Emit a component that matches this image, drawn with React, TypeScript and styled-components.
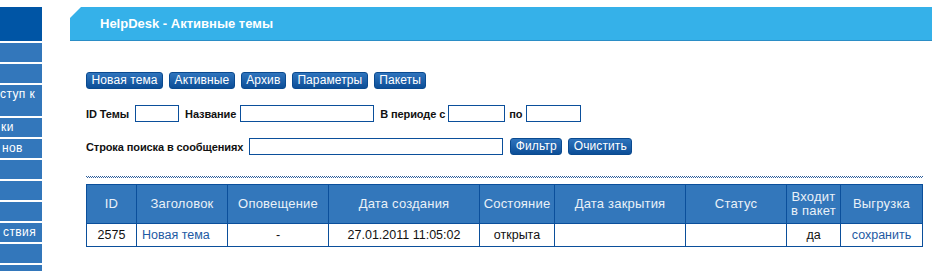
import styled, { createGlobalStyle } from 'styled-components'

const GlobalStyle = createGlobalStyle`
  html, body {
    margin: 0;
    padding: 0;
    background: #ffffff;
    font-family: "Liberation Sans", Arial, sans-serif;
  }
`

const Page = styled.div`
  display: flex;
  align-items: flex-start;
  padding-top: 7px;
  width: 932px;
  height: 271px;
  overflow: hidden;
  box-sizing: border-box;
`

const Sidebar = styled.nav`
  width: 42px;
  flex-shrink: 0;
  display: flex;
  flex-direction: column;
  gap: 2px;
`

const SideTop = styled.div`
  height: 34px;
  flex-shrink: 0;
  background: #0055a5;
`

const SideItem = styled.div<{ $tall?: boolean; $indent?: number }>`
  height: ${p => (p.$tall ? 31 : 19)}px;
  flex-shrink: 0;
  background: #3377bb;
  color: #ffffff;
  font-size: 12px;
  line-height: 18px;
  white-space: nowrap;
  overflow: hidden;
  letter-spacing: 0.4px;
  padding-left: ${p => p.$indent ?? 0}px;
`

const Main = styled.div`
  flex: 1;
  margin-left: 28px;
  display: flex;
  flex-direction: column;
`

const TitleBar = styled.div`
  height: 33px;
  background: #35b1e9;
  border-bottom: 1px solid #2b8ec6;
  clip-path: polygon(11px 0, 100% 0, 100% 100%, 0 100%, 0 11px);
  display: flex;
  align-items: center;
  padding-left: 30px;
  color: #ffffff;
  font-weight: bold;
  font-size: 13px;
`

const Content = styled.div`
  padding: 0 10px 0 16px;
  display: flex;
  flex-direction: column;
`

const ButtonRow = styled.div`
  display: flex;
  gap: 6px;
  margin-top: 31px;
`

const Button = styled.button`
  height: 17px;
  padding: 0 4.5px;
  border: 1px solid #0a4a8f;
  border-radius: 3px;
  background: linear-gradient(#2f74bd, #0c4e97);
  color: #ffffff;
  font-family: "Liberation Sans", Arial, sans-serif;
  font-size: 12px;
  line-height: 15px;
  letter-spacing: 0.1px;
  cursor: pointer;
`

const FilterRow = styled.div`
  display: flex;
  align-items: center;
  margin-top: 16px;
`

const Label = styled.span<{ $after?: number }>`
  font-size: 11px;
  font-weight: bold;
  color: #111111;
  letter-spacing: -0.1px;
  margin-right: ${p => p.$after ?? 5}px;
`

const Field = styled.input<{ $w: number; $after?: number }>`
  width: ${p => p.$w}px;
  height: 17px;
  box-sizing: border-box;
  border: 1px solid #0b4f9b;
  padding: 0 2px;
  margin: 0 ${p => p.$after ?? 6}px 0 0;
  font-size: 11px;
`

const FilterButton = styled(Button)`
  margin-right: 6px;
`

const Dotted = styled.div`
  height: 2px;
  margin-top: 21px;
  background:
    repeating-linear-gradient(90deg, #2f5f9c 0 1px, #ffffff 1px 2px) top / 100% 1px no-repeat,
    repeating-linear-gradient(90deg, #ffffff 0 1px, #2f5f9c 1px 2px) bottom / 100% 1px no-repeat;
`

const Table = styled.table`
  margin-top: 6px;
  width: 836px;
  table-layout: fixed;
  border-collapse: collapse;
  border: 1px solid #0b4f9b;
`

const Th = styled.th`
  height: 38px;
  background: #3377bb;
  color: #eaf1f8;
  font-weight: normal;
  font-size: 13px;
  line-height: 14px;
  border: 1px solid #0b4f9b;
  padding: 0 2px;
  letter-spacing: 0.2px;
`

const Td = styled.td<{ $left?: boolean }>`
  height: 22px;
  font-size: 12.5px;
  color: #111111;
  border: 1px solid #0b4f9b;
  text-align: ${p => (p.$left ? 'left' : 'center')};
  padding: 0 5px;
`

const Link = styled.a`
  color: #1d5aa3;
  text-decoration: none;
`

const columns = [
  { title: 'ID', w: 50 },
  { title: 'Заголовок', w: 91 },
  { title: 'Оповещение', w: 101 },
  { title: 'Дата создания', w: 151 },
  { title: 'Состояние', w: 75 },
  { title: 'Дата закрытия', w: 131 },
  { title: 'Статус', w: 101 },
  { title: 'Входит в пакет', w: 54 },
  { title: 'Выгрузка', w: 82 },
]

const sideItems: { text: string; tall?: boolean; indent?: number }[] = [
  { text: '' },
  { text: '' },
  { text: 'ступ к', tall: true, indent: 0 },
  { text: 'ки', indent: 1 },
  { text: 'нов', indent: 2 },
  { text: '' },
  { text: '' },
  { text: '' },
  { text: 'ствия', indent: 3 },
  { text: '' },
  { text: '' },
]

const App = () => {
  return (
    <>
      <GlobalStyle />
      <Page>
        <Sidebar>
          <SideTop />
          {sideItems.map((item, i) => (
            <SideItem key={i} $tall={item.tall} $indent={item.indent}>
              {item.text}
            </SideItem>
          ))}
        </Sidebar>

        <Main>
          <TitleBar>HelpDesk - Активные темы</TitleBar>
          <Content>
            <ButtonRow>
              <Button>Новая тема</Button>
              <Button>Активные</Button>
              <Button>Архив</Button>
              <Button>Параметры</Button>
              <Button>Пакеты</Button>
            </ButtonRow>

            <FilterRow>
              <Label $after={6}>ID Темы</Label>
              <Field $w={44} />
              <Label $after={4}>Название</Label>
              <Field $w={134} />
              <Label $after={3}>В периоде с</Label>
              <Field $w={57} $after={4} />
              <Label $after={4}>по</Label>
              <Field $w={55} />
            </FilterRow>

            <FilterRow>
              <Label $after={6}>Строка поиска в сообщениях</Label>
              <Field $w={254} $after={7} />
              <FilterButton>Фильтр</FilterButton>
              <Button>Очистить</Button>
            </FilterRow>

            <Dotted />

            <Table>
              <colgroup>
                {columns.map(c => (
                  <col key={c.title} style={{ width: c.w }} />
                ))}
              </colgroup>
              <thead>
                <tr>
                  {columns.map(c => (
                    <Th key={c.title}>{c.title}</Th>
                  ))}
                </tr>
              </thead>
              <tbody>
                <tr>
                  <Td>2575</Td>
                  <Td $left>
                    <Link href="#">Новая тема</Link>
                  </Td>
                  <Td>-</Td>
                  <Td>27.01.2011 11:05:02</Td>
                  <Td>открыта</Td>
                  <Td />
                  <Td />
                  <Td>да</Td>
                  <Td>
                    <Link href="#">сохранить</Link>
                  </Td>
                </tr>
              </tbody>
            </Table>
          </Content>
        </Main>
      </Page>
    </>
  )
}

export default App
